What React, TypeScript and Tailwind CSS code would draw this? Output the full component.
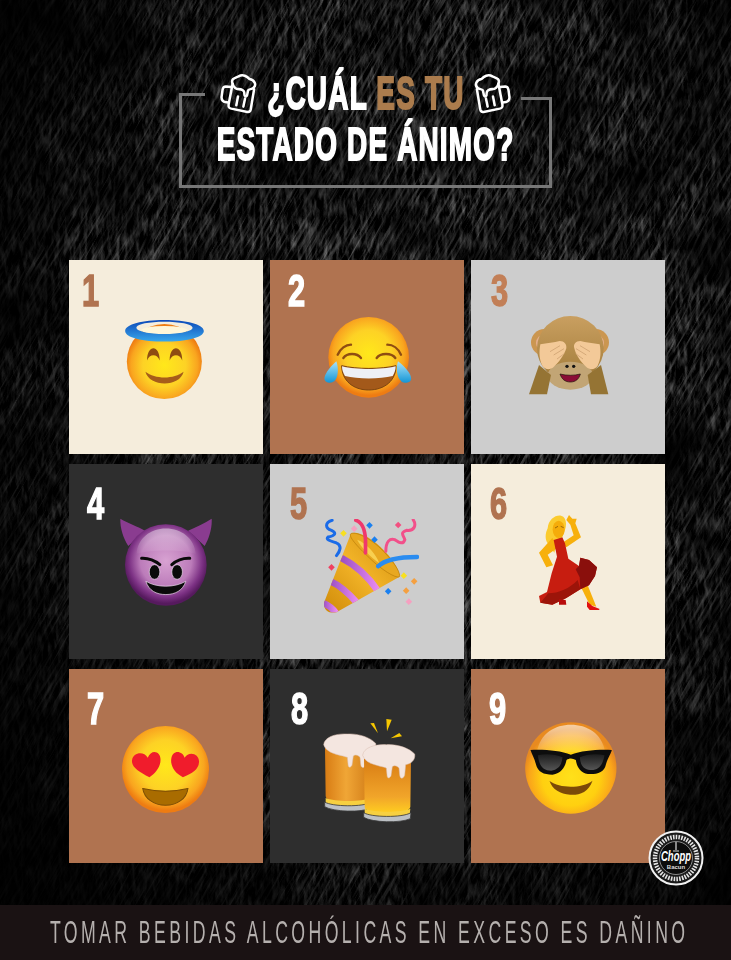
import type { ReactNode } from "react";

function Grad({ id, stops, r = "52%", cy = "45%" }: { id: string; stops: [string, string][]; r?: string; cy?: string }) {
  return (
    <radialGradient id={id} cx="50%" cy={cy} r={r}>
      {stops.map(([o, c]) => (
        <stop key={o} offset={o} stopColor={c} />
      ))}
    </radialGradient>
  );
}

const face: [string, string][] = [
  ["0%", "#ffe81a"],
  ["55%", "#fdd225"],
  ["85%", "#f9a51f"],
  ["100%", "#ee7c12"],
];

function Angel() {
  return (
    <svg viewBox="195 195 237 238" className="w-full h-full">
      <defs>
        <Grad id="angelFace" stops={face} cy="55%" />
        <linearGradient id="halo" x1="0" y1="0" x2="0" y2="1">
          <stop offset="0%" stopColor="#0c48b8" />
          <stop offset="100%" stopColor="#38a8ec" />
        </linearGradient>
      </defs>
      <circle cx="313" cy="320" r="113" fill="url(#angelFace)" />
      <ellipse cx="313" cy="226" rx="70" ry="13" fill="#fff6d8" />
      <path d="M261 317C261 268 299 268 299 317C292 296 268 296 261 317Z" fill="#8f4d12" />
      <path d="M329 317C329 268 367 268 367 317C360 296 336 296 329 317Z" fill="#8f4d12" />
      <path d="M256 351C285 374 342 374 371 351C360 398 268 398 256 351Z" fill="#a65d1a" />
      <path fillRule="evenodd" d="M195 228C195 208 248 195 313 195C378 195 432 208 432 228C432 248 378 260 313 260C248 260 195 248 195 228ZM229 218C229 229 268 237 313 237C358 237 398 229 398 218C398 207 358 200 313 200C268 200 229 207 229 218Z" fill="url(#halo)" />
    </svg>
  );
}

function Joy() {
  return (
    <svg viewBox="793 185 267 243" className="w-full h-full">
      <defs>
        <Grad id="joyFace" stops={face} />
        <linearGradient id="tear" x1="0" y1="0" x2="0" y2="1">
          <stop offset="0%" stopColor="#a8e2f8" />
          <stop offset="100%" stopColor="#1496d6" />
        </linearGradient>
      </defs>
      <circle cx="927" cy="306" r="121" fill="url(#joyFace)" />
      <g fill="none" stroke="#8f4d12" strokeWidth="7" strokeLinecap="round">
        <path d="M834 298C842 280 858 268 874 268" />
        <path d="M983 268C1000 268 1016 280 1024 298" />
        <path d="M851 308C862 292 892 292 904 308" />
        <path d="M951 308C962 292 996 292 1007 308" />
      </g>
      <path d="M846 331C890 342 965 342 1009 331C1010 375 975 404 927 404C880 404 846 375 846 331Z" fill="#a3591a" stroke="#7d4510" strokeWidth="3" />
      <path d="M847 333C890 344 965 344 1008 333C1008 345 1004 354 999 362C960 372 895 372 856 362C851 354 847 345 847 333Z" fill="#eef0f6" />
      <path d="M830 318C838 340 838 383 808 382C785 380 790 355 830 318Z" fill="url(#tear)" />
      <path d="M1015 318C1007 340 1012 385 1040 382C1065 380 1058 352 1015 318Z" fill="url(#tear)" />
    </svg>
  );
}

function Monkey() {
  return (
    <svg viewBox="192 183 240 237" className="w-full h-full">
      <defs>
        <linearGradient id="monkeyHead" x1="0" y1="0" x2="0" y2="1">
          <stop offset="0%" stopColor="#c99f60" />
          <stop offset="100%" stopColor="#a27c3a" />
        </linearGradient>
      </defs>
      <circle cx="238" cy="262" r="40" fill="#cb9650" />
      <circle cx="392" cy="262" r="40" fill="#cb9650" />
      <circle cx="240" cy="264" r="27" fill="#e6b08e" />
      <circle cx="390" cy="264" r="27" fill="#e6b08e" />
      <ellipse cx="316" cy="280" rx="100" ry="97" fill="url(#monkeyHead)" />
      <ellipse cx="316" cy="362" rx="68" ry="42" fill="#c2a575" />
      <path d="M222 330L192 418H246L258 360Z" fill="#957434" />
      <path d="M408 330L430 418H378L368 360Z" fill="#957434" />
      <path d="M226 268C245 264 268 262 284 258C298 258 306 268 304 280C298 300 282 322 266 336C255 346 240 344 232 332C222 312 222 290 226 268Z" fill="#f3c998" />
      <path d="M404 268C385 264 362 262 346 258C332 258 324 268 328 280C332 300 348 322 364 336C375 346 390 344 398 332C408 312 408 290 404 268Z" fill="#f3c998" />
      <g stroke="#cfa272" strokeWidth="2.5" fill="none">
        <path d="M255 290L285 272" />
        <path d="M266 300L297 281" />
        <path d="M276 312L298 296" />
        <path d="M375 290L345 272" />
        <path d="M364 300L333 281" />
        <path d="M354 312L332 296" />
      </g>
      <circle cx="306" cy="334" r="5" fill="#111" />
      <circle cx="326" cy="334" r="5" fill="#111" />
      <path d="M285 357C305 362 328 362 346 357C342 372 332 381 316 381C300 381 290 372 285 357Z" fill="#8a0c36" stroke="#1c1008" strokeWidth="2" />
    </svg>
  );
}

function Devil() {
  return (
    <svg viewBox="180 175 277 265" className="w-full h-full">
      <defs>
        <Grad id="devilFace" stops={[["0%", "#d8a2d2"], ["60%", "#bc7cba"], ["86%", "#7c3184"], ["100%", "#561a5e"]]} />
        <linearGradient id="devilHi" x1="0" y1="0" x2="0" y2="1">
          <stop offset="0%" stopColor="#fff" stopOpacity="0.45" />
          <stop offset="100%" stopColor="#fff" stopOpacity="0.03" />
        </linearGradient>
      </defs>
      <path d="M181 176C205 190 235 200 255 212L205 258C190 235 180 205 181 176Z" fill="#8a3c90" />
      <path d="M456 176C432 192 410 200 385 212L435 258C448 235 458 205 456 176Z" fill="#8a3c90" />
      <circle cx="318" cy="315" r="123" fill="url(#devilFace)" />
      <path d="M230 282C232 235 272 205 318 205C365 205 405 235 408 282C370 268 270 268 230 282Z" fill="url(#devilHi)" />
      <path d="M245 295C265 294 285 302 300 314" stroke="#0a0a0a" strokeWidth="9" strokeLinecap="round" fill="none" />
      <path d="M390 295C370 294 350 302 336 314" stroke="#0a0a0a" strokeWidth="9" strokeLinecap="round" fill="none" />
      <ellipse cx="284" cy="336" rx="16" ry="22" fill="#0a0a0a" stroke="#f0e0f0" strokeWidth="2" />
      <ellipse cx="352" cy="336" rx="16" ry="22" fill="#0a0a0a" stroke="#f0e0f0" strokeWidth="2" />
      <path d="M258 364C290 384 345 384 378 364C370 392 345 404 318 404C290 404 266 392 258 364Z" fill="#0a0a0a" stroke="#f0e0f0" strokeWidth="2" />
    </svg>
  );
}

function Party() {
  return (
    <svg viewBox="790 178 287 282" className="w-full h-full">
      <defs>
        <linearGradient id="cone" x1="0" y1="1" x2="1" y2="0">
          <stop offset="0%" stopColor="#cf8a08" />
          <stop offset="50%" stopColor="#f2b428" />
          <stop offset="100%" stopColor="#d08c0c" />
        </linearGradient>
        <linearGradient id="stripe" x1="0" y1="0" x2="1" y2="0">
          <stop offset="0%" stopColor="#9c50c4" />
          <stop offset="100%" stopColor="#e88af0" />
        </linearGradient>
        <clipPath id="coneClip">
          <path d="M873 222L793 428C790 450 805 462 830 458L1018 352C1022 340 1008 310 975 275C935 232 890 212 873 222Z" />
        </clipPath>
      </defs>
      <path d="M873 222L793 428C790 450 805 462 830 458L1018 352C1022 340 1008 310 975 275C935 232 890 212 873 222Z" fill="url(#cone)" />
      <g clipPath="url(#coneClip)" fill="none" stroke="url(#stripe)" strokeWidth="20">
        <path d="M845 295C885 315 925 350 955 395" />
        <path d="M812 365C845 380 870 405 892 430" />
        <path d="M790 430C805 436 820 448 830 462" />
      </g>
      <path d="M873 222C885 215 930 232 972 276C1010 315 1024 345 1018 352C1005 355 965 330 930 296C890 258 865 230 873 222Z" fill="#e8a820" stroke="#b87c08" strokeWidth="2" />
      <path d="M892 240C920 250 950 285 958 310C935 295 905 265 892 240Z" fill="#f8d050" />
      <g fill="none" strokeLinecap="round">
        <path d="M817 182C795 188 795 205 815 212C832 220 825 228 805 232C795 240 815 245 830 250C848 258 840 275 830 288" stroke="#1a6be8" strokeWidth="9" />
        <path d="M888 182C905 187 915 205 917 240L917 280" stroke="#f0386c" strokeWidth="11" />
        <path d="M978 275C978 245 990 235 1005 240C1020 250 1030 255 1035 240C1030 225 1020 220 1040 212C1065 215 1070 195 1060 180" stroke="#f2508a" strokeWidth="9" />
        <path d="M955 320C975 300 1020 292 1072 292" stroke="#2a8cf0" strokeWidth="13" />
      </g>
      {[
        [851, 221, "#f8e020"],
        [883, 207, "#f5a0c0"],
        [929, 197, "#1a80f0"],
        [944, 240, "#1a80f0"],
        [1015, 196, "#f25080"],
        [815, 323, "#f04060"],
        [1032, 348, "#f8e020"],
        [1063, 365, "#f5a040"],
        [1039, 393, "#f5a040"],
        [985, 395, "#1a80f0"],
        [1047, 426, "#f5a0c0"],
      ].map(([x, y, c]) => (
        <rect key={`${x}-${y}`} x={(x as number) - 7} y={(y as number) - 7} width="14" height="14" fill={c as string} transform={`rotate(45 ${x} ${y})`} />
      ))}
    </svg>
  );
}

function Dancer() {
  return (
    <svg viewBox="222 165 183 285" className="w-full h-full">
      <path d="M248 205C250 178 272 164 288 167C304 171 306 192 300 210L292 232L276 244L268 278L248 250C238 234 242 218 248 205Z" fill="#fbcb2e" />
      <ellipse cx="281" cy="208" rx="18" ry="26" fill="#f5ac0a" />
      <path d="M270 204L279 199M287 199L296 203" stroke="#8a5a08" strokeWidth="2.5" />
      <path d="M290 250L326 226L316 194L304 180L312 165L322 176L335 176L331 190L348 232L304 262Z" fill="#f7b00c" />
      <path d="M262 234L222 278L244 322L264 316L248 284L280 262Z" fill="#f7b00c" />
      <path d="M348 382L368 376L394 440L374 434Z" fill="#f7b00c" />
      <path d="M266 240L292 232L300 250L310 296L342 318L346 293L372 300L396 322L390 348L372 376L346 388L304 414L262 434L226 428L222 408L246 396L260 340L276 290Z" fill="#c71d10" />
      <path d="M332 328L342 318L346 293L372 300L396 322L390 348L372 376L346 388L344 352Z" fill="#8a0f0c" />
      <path d="M250 400C280 400 315 385 338 360L346 388L304 414L262 434L226 428Z" fill="#9c1409" />
      <path d="M366 424L382 438L404 447L402 450H374L366 440Z" fill="#e01010" />
      <path d="M282 418L302 420L304 434H282Z" fill="#b80c0c" />
    </svg>
  );
}

function Hearts() {
  return (
    <svg viewBox="185 183 260 260" className="w-full h-full">
      <defs>
        <Grad id="heartFace" stops={face} />
      </defs>
      <circle cx="315" cy="313" r="130" fill="url(#heartFace)" />
      <path d="M267 336C235 320 212 305 215 285C218 262 250 256 262 278C272 250 302 258 300 285C300 305 285 325 267 336Z" fill="#f01c2c" />
      <path d="M367 336C345 325 330 305 332 283C335 252 366 256 372 278C385 256 418 266 415 292C414 312 395 325 367 336Z" fill="#f01c2c" />
      <path d="M247 370C290 380 340 380 382 370C378 400 350 420 315 420C280 420 252 400 247 370Z" fill="#a96c00" stroke="#7c4d05" strokeWidth="3" />
    </svg>
  );
}

function Mug({ prefix }: { prefix: string }) {
  return (
    <g>
      <path d="M795 250L797 395C797 420 932 420 934 395L936 250Z" fill={`url(#${prefix})`} />
      <path d="M797 400C825 412 905 412 934 400L932 420C905 428 825 428 797 420Z" fill="#f7d040" />
      <path d="M794 412C815 426 910 428 936 412L934 430C905 444 820 442 794 426Z" fill="#bcc0c4" stroke="#3a3a3a" strokeWidth="2.5" />
      <path d="M791 240C793 218 825 206 862 208C895 206 930 218 947 236C950 255 935 266 920 268L917 300C912 312 903 312 902 298L900 278C892 270 885 270 880 274L876 302C870 312 864 308 864 298L862 278C840 270 800 268 791 240Z" fill="#f4e6e0" stroke="#d8bcae" strokeWidth="1.5" />
    </g>
  );
}

function Beers() {
  return (
    <svg viewBox="790 160 280 315" className="w-full h-full">
      <defs>
        <linearGradient id="beerA" x1="0" y1="0" x2="1" y2="0">
          <stop offset="0%" stopColor="#d87c14" />
          <stop offset="45%" stopColor="#f0a636" />
          <stop offset="100%" stopColor="#d07a16" />
        </linearGradient>
        <linearGradient id="beerB" x1="0" y1="0" x2="0" y2="1">
          <stop offset="0%" stopColor="#d87c14" />
          <stop offset="70%" stopColor="#f1a52a" />
          <stop offset="100%" stopColor="#ffce20" />
        </linearGradient>
      </defs>
      <Mug prefix="beerA" />
      <g transform="translate(117 32)">
        <Mug prefix="beerB" />
      </g>
      <g fill="#f8c800">
        <path d="M931 176L942 175L954 206Z" />
        <path d="M979 163L995 165L981 200Z" />
        <path d="M992 221L1018 205L1026 215Z" />
      </g>
    </svg>
  );
}

function Cool() {
  return (
    <svg viewBox="180 172 275 276" className="w-full h-full">
      <defs>
        <Grad id="coolFace" stops={[["0%", "#ffe01a"], ["60%", "#ffd010"], ["88%", "#faa51a"], ["100%", "#e88a20"]]} cy="60%" />
        <linearGradient id="coolHi" x1="0" y1="0" x2="0" y2="1">
          <stop offset="0%" stopColor="#fff" stopOpacity="0.6" />
          <stop offset="100%" stopColor="#fff" stopOpacity="0.1" />
        </linearGradient>
        <linearGradient id="lens" x1="0" y1="0" x2="0" y2="1">
          <stop offset="0%" stopColor="#1c1c1c" />
          <stop offset="100%" stopColor="#555" />
        </linearGradient>
      </defs>
      <circle cx="317" cy="310" r="137" fill="url(#coolFace)" />
      <path d="M215 262C225 205 270 180 317 180C365 180 410 205 420 262Z" fill="url(#coolHi)" />
      <path d="M196 256C240 254 285 258 317 270C350 258 395 254 440 256C436 270 428 280 422 300C418 322 395 330 368 328C345 324 335 306 332 286C322 280 312 280 304 286C300 306 290 326 262 330C235 330 218 322 212 298C208 280 200 270 196 256Z" fill="#0d0d0d" />
      <path d="M218 272C240 266 270 268 292 278C290 300 280 315 258 318C235 318 222 305 218 272Z" fill="url(#lens)" />
      <path d="M344 278C365 268 395 266 418 272C412 305 398 318 375 316C355 315 345 300 344 278Z" fill="url(#lens)" />
      <path d="M253 349C285 372 350 372 382 348C370 384 340 392 315 390C285 388 262 375 253 349Z" fill="#7c4a08" />
    </svg>
  );
}

function MugIcon({ flip }: { flip?: boolean }) {
  return (
    <svg viewBox="22 15 115 128" className={flip ? "w-[39px] h-[43px] -scale-x-100" : "w-[39px] h-[43px]"}>
      <g fill="none" stroke="#fff" strokeWidth="7.5" strokeLinecap="round" strokeLinejoin="round">
        <path d="M62 50C55 34 72 32 80 28C92 20 106 28 112 36C128 38 134 54 124 62C118 68 112 64 108 70L105 84C102 91 96 88 97 78C97 70 88 66 80 66C72 66 65 60 62 50Z" />
        <path d="M62 50L50 112C49 120 51 122 58 124L106 134C113 135 115 131 116 126L126 66" />
        <path d="M57 60L42 58C36 58 33 62 32 68L29 90C29 100 34 104 44 105L50 106" />
        <path d="M78 88L73 114" />
        <path d="M99 94L94 118" />
      </g>
    </svg>
  );
}

function Logo() {
  return (
    <svg viewBox="0 0 58 58" className="absolute left-[647px] top-[829px] w-[58px] h-[58px]">
      <circle cx="29" cy="29" r="26.5" fill="#1a1a1a" stroke="#f2f2f2" strokeWidth="2" />
      <circle cx="29" cy="29" r="21" fill="none" stroke="#e4e4e4" strokeWidth="4.5" strokeDasharray="1.6 1.2" />
      <circle cx="29" cy="29" r="16.5" fill="#0c0c0c" stroke="#bbb" strokeWidth="0.7" />
      <path d="M29 13V21M26 22H32" stroke="#ddd" strokeWidth="1.2" />
      <text x="29" y="32" textAnchor="middle" fontSize="14" fontWeight="700" fontStyle="italic" fill="#fff" fontFamily="Liberation Sans, sans-serif" textLength="30" lengthAdjust="spacingAndGlyphs">Chopp</text>
      <text x="29" y="40" textAnchor="middle" fontSize="6" fontWeight="700" fill="#ddd" fontFamily="Liberation Sans, sans-serif">Bacun</text>
    </svg>
  );
}

type Cell = {
  n: number;
  bg: string;
  num: string;
  numPos: string;
  art: string;
  icon: ReactNode;
};

const cells: Cell[] = [
  { n: 1, bg: "bg-[#f5eddc]", num: "text-[#b07350]", numPos: "ml-[13px] mt-[9px]", art: "ml-[56px] mt-[60px] w-[79px] h-[79px]", icon: <Angel /> },
  { n: 2, bg: "bg-[#b07350]", num: "text-white", numPos: "ml-[18px] mt-[9px]", art: "ml-[54px] mt-[57px] w-[89px] h-[81px]", icon: <Joy /> },
  { n: 3, bg: "bg-[#cdcdcd]", num: "text-[#c27f57]", numPos: "ml-[20px] mt-[9px]", art: "ml-[58px] mt-[56px] w-[80px] h-[79px]", icon: <Monkey /> },
  { n: 4, bg: "bg-[#2e2e2e]", num: "text-white", numPos: "ml-[18px] mt-[18px]", art: "ml-[51px] mt-[54px] w-[92px] h-[89px]", icon: <Devil /> },
  { n: 5, bg: "bg-[#cdcdcd]", num: "text-[#b07350]", numPos: "ml-[20px] mt-[18px]", art: "ml-[53px] mt-[55px] w-[96px] h-[94px]", icon: <Party /> },
  { n: 6, bg: "bg-[#f5eddc]", num: "text-[#b07350]", numPos: "ml-[19px] mt-[18px]", art: "ml-[68px] mt-[51px] w-[61px] h-[95px]", icon: <Dancer /> },
  { n: 7, bg: "bg-[#b07350]", num: "text-white", numPos: "ml-[18px] mt-[18px]", art: "ml-[53px] mt-[57px] w-[87px] h-[87px]", icon: <Hearts /> },
  { n: 8, bg: "bg-[#2e2e2e]", num: "text-white", numPos: "ml-[21px] mt-[18px]", art: "ml-[53px] mt-[49px] w-[94px] h-[105px]", icon: <Beers /> },
  { n: 9, bg: "bg-[#b07350]", num: "text-white", numPos: "ml-[18px] mt-[18px]", art: "ml-[54px] mt-[53px] w-[92px] h-[92px]", icon: <Cool /> },
];

export default function App() {
  return (
    <div className="relative w-[731px] h-[960px] overflow-hidden bg-black font-['Liberation_Sans',sans-serif]">
      {/* stone texture behind everything */}
      <svg className="absolute inset-0 w-full h-full">
        <defs>
          <filter id="grain" x="0" y="0" width="100%" height="100%">
            <feTurbulence type="fractalNoise" baseFrequency="0.25 0.06" numOctaves="4" seed="11" />
            <feColorMatrix values="0 0 0 0 1  0 0 0 0 1  0 0 0 0 1  0.8 0 0 0 -0.34" />
          </filter>
          <filter id="scratch" x="0" y="0" width="100%" height="100%">
            <feTurbulence type="fractalNoise" baseFrequency="0.4 0.025" numOctaves="3" seed="4" />
            <feColorMatrix values="0 0 0 0 1  0 0 0 0 1  0 0 0 0 1  1.0 0 0 0 -0.48" />
          </filter>
          <filter id="blotch" x="0" y="0" width="100%" height="100%">
            <feTurbulence type="fractalNoise" baseFrequency="0.014" numOctaves="3" seed="8" />
            <feColorMatrix values="0 0 0 0 0  0 0 0 0 0  0 0 0 0 0  1.6 0 0 0 -0.55" />
          </filter>
        </defs>
        <rect width="731" height="960" filter="url(#grain)" />
        <rect x="-300" y="-300" width="1400" height="1500" filter="url(#scratch)" transform="rotate(30 365 480)" />
        <rect width="731" height="960" filter="url(#blotch)" />
      </svg>
      <div className="absolute inset-0 bg-[radial-gradient(ellipse_66%_70%_at_56%_40%,rgba(0,0,0,0)_0%,rgba(0,0,0,0.25)_60%,rgba(0,0,0,0.9)_100%)]" />

      <div className="relative flex flex-col h-full">
        <header className="relative h-[260px] pt-[67px] flex flex-col items-center">
          <div className="absolute left-[179px] top-[97px] w-[373px] h-[91px] border-x-[3px] border-b-[3px] border-[#777]" />
          <div className="absolute left-[179px] top-[93px] w-[26px] h-[3px] bg-[#777]" />
          <div className="absolute left-[179px] top-[93px] w-[3px] h-[6px] bg-[#777]" />
          <div className="absolute left-[521px] top-[97px] w-[31px] h-[3px] bg-[#777]" />
          <div className="relative flex items-center justify-center w-[293px] h-[52px]">
            <MugIcon />
            <div className="w-[215px] flex justify-center whitespace-nowrap">
              <span className="inline-block scale-x-[0.595] text-[47px] leading-[52px] font-bold text-white [-webkit-text-stroke:2px_#fff] tracking-[2px]">
                ¿CUÁL <span className="text-[#ab7c4d] [-webkit-text-stroke:2px_#ab7c4d]">ES TU</span>
              </span>
            </div>
            <MugIcon flip />
          </div>
          <div className="relative whitespace-nowrap -mt-[1px]">
            <span className="inline-block scale-x-[0.594] text-[47px] leading-[52px] font-bold text-white [-webkit-text-stroke:2px_#fff] tracking-[2px]">
              ESTADO DE ÁNIMO?
            </span>
          </div>
        </header>

        <div className="ml-[69px] grid grid-cols-[194px_194px_194px] grid-rows-[194px_195px_194px] gap-x-[7px] gap-y-[10px]">
          {cells.map((c) => (
            <div key={c.n} className={`${c.bg} grid grid-cols-1 grid-rows-1`}>
              <div className={`${c.num} ${c.numPos} col-start-1 row-start-1 self-start justify-self-start origin-left scale-x-[0.7] text-[44px] leading-none font-bold [-webkit-text-stroke:1.5px_currentColor]`}>
                {c.n}
              </div>
              <div className={`${c.art} col-start-1 row-start-1 self-start justify-self-start`}>{c.icon}</div>
            </div>
          ))}
        </div>

        <footer className="mt-auto h-[55px] bg-[#1a1213] flex items-center justify-center overflow-hidden whitespace-nowrap">
          <span className="inline-block ml-[7px] scale-x-[0.57] text-[31px] leading-none text-[#b5b0ae] tracking-[6px]">
            TOMAR BEBIDAS ALCOHÓLICAS EN EXCESO ES DAÑINO
          </span>
        </footer>
      </div>
      <Logo />
    </div>
  );
}
